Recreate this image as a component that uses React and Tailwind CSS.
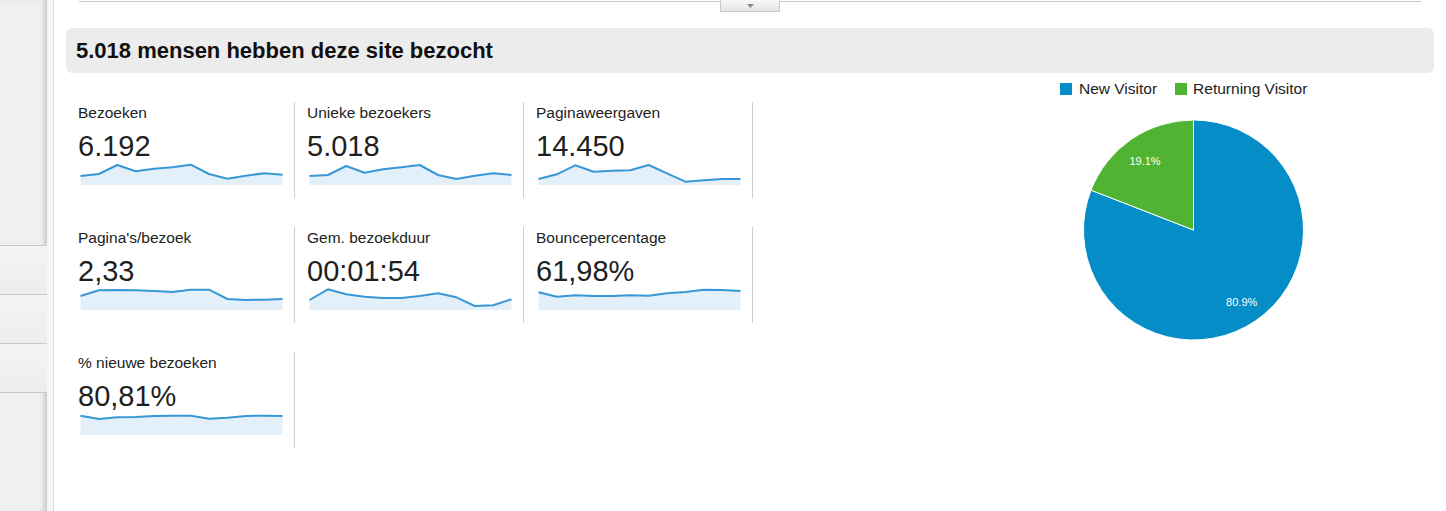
import React from "react";

const metrics = [
  [
    { label: "Bezoeken", value: "6.192", data: [18, 16, 7, 13.3, 10.7, 9.3, 6.7, 16, 20.7, 17.7, 15.3, 16.7] },
    { label: "Unieke bezoekers", value: "5.018", data: [18, 17, 8, 14.7, 11.3, 9.3, 7, 17, 21, 17.7, 15.3, 17] },
    { label: "Paginaweergaven", value: "14.450", data: [21, 16.3, 7.3, 13.7, 12.7, 12.3, 7, 15.3, 23.7, 22.3, 21, 21] },
  ],
  [
    { label: "Pagina's/bezoek", value: "2,33", data: [13, 7.3, 7, 7.3, 8, 9, 6.7, 6.7, 16, 17, 16.7, 16] },
    { label: "Gem. bezoekduur", value: "00:01:54", data: [17, 6.3, 11.3, 13.7, 15, 15, 13, 10.3, 14.3, 23, 22.3, 16.3] },
    { label: "Bouncepercentage", value: "61,98%", data: [9.3, 13.7, 12.3, 13, 13, 12.3, 12.7, 10.3, 9, 6.7, 7, 8] },
  ],
  [
    { label: "% nieuwe bezoeken", value: "80,81%", data: [7.7, 11, 9.3, 9, 8, 7.7, 7.7, 10.7, 9.7, 8, 7.7, 8] },
  ],
];

// Small area sparkline, 203x28
const Sparkline = ({ data }) => {
  const step = 202 / (data.length - 1);
  const pts = data.map((y, i) => `${(0.5 + i * step).toFixed(1)},${y}`);
  const area = `M0.5,27 L${pts.join(" L")} L202.5,27 Z`;
  return (
    <svg width="203" height="28" className="block ml-[2px] -mt-[2px]">
      <path d={area} fill="#e4f0f9" />
      <polyline points={pts.join(" ")} fill="none" stroke="#3897d6" strokeWidth="2" strokeLinejoin="round" />
    </svg>
  );
};

const MetricCell = ({ m }) => (
  <div className="w-[229px] h-[96px] border-r border-[#cfcfcf] pl-[12px] pt-[2px]">
    <div className="text-[15.5px] leading-[18px] text-[#222]">{m.label}</div>
    <div className="mt-[10px] text-[29px] leading-[28px] text-[#1f1f1f]">{m.value}</div>
    <Sparkline data={m.data} />
  </div>
);

const Sidebar = () => (
  <div className="flex shrink-0">
    <div className="w-[47px] flex flex-col bg-[#f0f0f0] shadow-[inset_-5px_0_4px_-2px_rgba(0,0,0,0.16)]">
      <div className="h-[245px]" />
      <div className="h-[49px] border-t border-[#c9c9c9] bg-gradient-to-b from-[#f4f4f4] to-[#ededed]" />
      <div className="h-[49px] border-t border-[#c9c9c9] bg-gradient-to-b from-[#f4f4f4] to-[#ededed]" />
      <div className="h-[49px] border-t border-[#c9c9c9] bg-gradient-to-b from-[#f4f4f4] to-[#ededed]" />
      <div className="flex-1 border-t border-[#c9c9c9]" />
    </div>
    <div className="w-[7px] bg-[#f6f6f6] border-r border-[#dedede]" />
  </div>
);

const PieChart = () => {
  const cx = 153.5;
  const cy = 115;
  const r = 110;
  const bx = 50.97;
  const by = 75.16;
  return (
    <svg width="310" height="230" className="block">
      <path d={`M${cx},${cy} L${cx},${cy - r} A${r},${r} 0 1 1 ${bx},${by} Z`} fill="#058dc7" stroke="#fff" strokeWidth="1" />
      <path d={`M${cx},${cy} L${bx},${by} A${r},${r} 0 0 1 ${cx},${cy - r} Z`} fill="#50b432" stroke="#fff" strokeWidth="1" />
      <text x="105" y="49.5" textAnchor="middle" fontSize="11" fill="#fff" fontFamily="'Liberation Sans', Arial, sans-serif">19.1%</text>
      <text x="201.7" y="190.5" textAnchor="middle" fontSize="11" fill="#fff" fontFamily="'Liberation Sans', Arial, sans-serif">80.9%</text>
    </svg>
  );
};

export default function App() {
  return (
    <div className="flex w-[1446px] h-[511px] overflow-hidden bg-white font-['Liberation_Sans',Arial,sans-serif]">
      <Sidebar />

      {/* Main content */}
      <div className="flex-1 flex flex-col">
        <div className="relative h-[28px]">
          <div className="mx-[25px] mt-px h-px bg-[#c8c8c8]" />
          <div className="absolute left-1/2 top-0 -translate-x-1/2 w-[60px] h-[12px] flex items-center justify-center bg-gradient-to-b from-[#f8f8f8] to-[#e4e4e4] border border-t-0 border-[#c9c9c9]">
            <svg width="7" height="4" viewBox="0 0 7 4">
              <path d="M0 0 L7 0 L3.5 4 Z" fill="#8c8c8c" />
            </svg>
          </div>
        </div>

        <div className="mx-[12px] h-[45px] rounded-[6px] bg-[#ececec] flex items-center pl-[10px]">
          <h1 className="text-[22px] leading-[26px] font-bold text-[#111]">5.018 mensen hebben deze site bezocht</h1>
        </div>

        <div className="flex pl-[12px]">
          <div className="flex flex-col gap-[29px] pt-[29px]">
            {metrics.map((row, i) => (
              <div key={i} className="flex">
                {row.map((m) => (
                  <MetricCell key={m.label} m={m} />
                ))}
              </div>
            ))}
          </div>

          <div className="ml-[287px] w-[310px] flex flex-col">
            <div className="flex items-center pl-[20px] mt-[7px] h-[18px] text-[15.5px] text-[#222]">
              <span className="w-[12px] h-[12px] bg-[#058dc7]" />
              <span className="ml-[7px]">New Visitor</span>
              <span className="ml-[18px] w-[12px] h-[12px] bg-[#50b432]" />
              <span className="ml-[6px]">Returning Visitor</span>
            </div>
            <div className="mt-[17px]">
              <PieChart />
            </div>
          </div>
        </div>
      </div>
    </div>
  );
}
